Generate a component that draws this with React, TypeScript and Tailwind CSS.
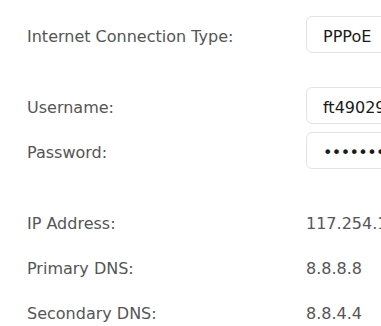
import React from 'react';

type Row = {
  label: string;
  value: string;
  input?: boolean;
  secret?: boolean;
};

const groups: Row[][] = [
  [{ label: 'Internet Connection Type:', value: 'PPPoE', input: true }],
  [
    { label: 'Username:', value: 'ft49029xk', input: true },
    { label: 'Password:', value: '••••••••••', input: true, secret: true },
  ],
  [
    { label: 'IP Address:', value: '117.254.128.43' },
    { label: 'Primary DNS:', value: '8.8.8.8' },
    { label: 'Secondary DNS:', value: '8.8.4.4' },
  ],
];

export default function App() {
  return (
    <div className="h-[326px] w-[381px] overflow-hidden bg-white pl-[27px] pt-4 font-['DejaVu_Sans',sans-serif] text-[16px]">
      <div className="flex flex-col gap-[34px]">
        {groups.map((rows, gi) => (
          <div key={gi} className="flex flex-col gap-2">
            {rows.map((row) => (
              <div key={row.label} className="flex h-[37px] items-center">
                <div className="w-[279px] shrink-0 pt-1 text-[#555]">{row.label}</div>
                {row.input ? (
                  <div
                    className={
                      row.secret
                        ? 'flex h-[37px] w-[200px] shrink-0 items-center rounded-md border border-[#e3e3e3] px-4 pt-1 tracking-[-0.6px] text-[#1a1a1a]'
                        : 'flex h-[37px] w-[200px] shrink-0 items-center rounded-md border border-[#e3e3e3] px-4 pt-1 text-[#1a1a1a]'
                    }
                  >
                    {row.value}
                  </div>
                ) : (
                  <div className="shrink-0 whitespace-nowrap pt-1 text-[#555]">{row.value}</div>
                )}
              </div>
            ))}
          </div>
        ))}
      </div>
    </div>
  );
}
